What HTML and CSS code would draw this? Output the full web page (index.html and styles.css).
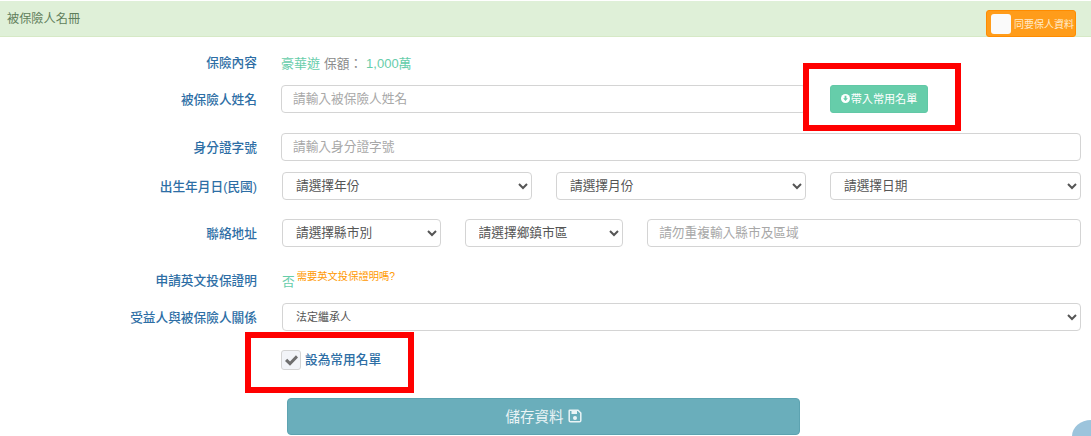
FILE: index.html
```html
<!DOCTYPE html>
<html lang="zh-Hant">
<head>
<meta charset="utf-8">
<title>被保險人名冊</title>
<link rel="stylesheet" href="styles.css">
</head>
<body>
<div class="panel-head">
  <span class="panel-title">被保險人名冊</span>
  <label class="same-btn"><span class="same-box"></span><span>同要保人資料</span></label>
</div>
<form class="form">
  <div class="row row-plan">
    <div class="label">保險內容</div>
    <div class="field plan"><span class="green">豪華遊</span><span class="gray">保額：</span><span class="green amount">1,000萬</span></div>
  </div>
  <div class="row row-name">
    <div class="label">被保險人姓名</div>
    <div class="field">
      <input class="control name-input" type="text" placeholder="請輸入被保險人姓名">
      <button class="import-btn" type="button">
        <svg class="import-icon" viewBox="0 0 16 16"><circle cx="8" cy="8" r="8" fill="#fff"/><path d="M6.400 3.200h3.200v4.400h2.600L8 12.400 3.800 7.600h2.600z" fill="#66cdaa"/></svg>帶入常用名單
      </button>
    </div>
  </div>
  <div class="row row-id">
    <div class="label">身分證字號</div>
    <div class="field"><input class="control grow" type="text" placeholder="請輸入身分證字號"></div>
  </div>
  <div class="row row-dob">
    <div class="label">出生年月日(民國)</div>
    <div class="field gap-24">
      <select class="control sel third"><option>請選擇年份</option></select>
      <select class="control sel third"><option>請選擇月份</option></select>
      <select class="control sel grow"><option>請選擇日期</option></select>
    </div>
  </div>
  <div class="row row-addr">
    <div class="label">聯絡地址</div>
    <div class="field gap-24">
      <select class="control sel small"><option>請選擇縣市別</option></select>
      <select class="control sel small"><option>請選擇鄉鎮市區</option></select>
      <input class="control grow" type="text" placeholder="請勿重複輸入縣市及區域">
    </div>
  </div>
  <div class="row row-en">
    <div class="label">申請英文投保證明</div>
    <div class="field en"><span class="green no">否</span><span class="hint">需要英文投保證明嗎?</span></div>
  </div>
  <div class="row row-rel">
    <div class="label">受益人與被保險人關係</div>
    <div class="field"><select class="control sel rel grow"><option>法定繼承人</option></select></div>
  </div>
  <div class="row row-check">
    <div class="label"></div>
    <label class="field check">
      <span class="check-box"><svg viewBox="0 0 16 14" width="15" height="13"><path d="M1 7.500 3.400 5l3 3L12.800 1.400 15 3.800 6.400 12.600z" fill="#6f6f6f"/></svg></span>
      <span class="check-text">設為常用名單</span>
    </label>
  </div>
  <button class="save-btn" type="button">儲存資料
    <svg class="save-icon" viewBox="0 0 14 14"><path d="M1.800 1.200H10L12.800 4V11.500A1.300 1.300 0 0 1 11.500 12.800H2.500A1.300 1.300 0 0 1 1.200 11.500V1.800A.6.600 0 0 1 1.800 1.200Z" fill="none" stroke="#eaf4f6" stroke-width="1.500"/><path d="M3.500 1.500H9V5H3.500Z" fill="#eaf4f6"/><circle cx="7" cy="9" r="2" fill="#eaf4f6"/></svg>
  </button>
</form>
<div class="mark mark-a"></div>
<div class="mark mark-b"></div>
<div class="float-circle"></div>
</body>
</html>
```
FILE: styles.css
```css
* { box-sizing: border-box; }
html, body { height: 100%; }
html { overflow: hidden; }
body {
  margin: 0;
  overflow: hidden;
  position: relative;
  background: #fff;
  font-family: "Liberation Sans", "Noto Sans CJK TC", sans-serif;
  font-size: 13px;
  color: #555;
}
.panel-head {
  margin-top: 1px;
  height: 36px;
  background: #dff0d8;
  border-bottom: 1px solid #d6e9c6;
  display: flex;
  align-items: flex-start;
  justify-content: space-between;
  padding: 0 15px 0 7px;
}
.panel-title { font-size: 12.200px; line-height: 36px; color: #5f7f5c; }
.same-btn {
  margin-top: 9px;
  width: 90px;
  height: 27px;
  background: #ff9c1a;
  border: 1px solid #ff8c00;
  border-radius: 3px;
  display: flex;
  align-items: center;
  padding-left: 4px;
  gap: 3px;
  color: #ffeccf;
  font-size: 10px;
  white-space: nowrap;
}
.same-box { width: 20px; height: 20px; background: #fafafa; border-radius: 3px; flex: none; }
.form { display: block; padding-right: 10px; }
.row { display: flex; align-items: center; }
.label {
  width: 257px;
  flex: none;
  text-align: right;
  font-size: 12.700px;
  font-weight: 500;
  color: #2d6ea5;
  padding-bottom: 2px;
}
.field { margin-left: 24px; flex: 1; display: flex; align-items: center; min-width: 0; }
.gap-24 { gap: 24px; }
.row-plan { margin-top: 15px; height: 21px; }
.row-name { margin-top: 12px; height: 28px; }
.row-id { margin-top: 20px; height: 28px; }
.row-dob { margin-top: 11px; height: 28px; }
.row-addr { margin-top: 19px; height: 28px; }
.row-en { margin-top: 23px; height: 20px; }
.row-rel { margin-top: 13px; height: 28px; }
.row-check { margin-top: 18px; height: 22px; }
.row-dob .field, .row-addr .field, .row-rel .field, .row-en .field { padding-left: 1px; }
.control {
  height: 28px;
  border: 1px solid #d4d4d4;
  border-radius: 4px;
  background: #fff;
  font-family: inherit;
  font-size: 12.700px;
  color: #555;
  padding: 0 11px;
  min-width: 0;
  outline: none;
}
.control::placeholder { color: #a8a8a8; opacity: 1; }
.grow { flex: 1; }
.name-input { width: 525px; flex: none; }
.sel { padding-left: 9px; }
.third { width: 250px; flex: none; }
.small { width: 158.600px; flex: none; }
.rel { font-size: 11px; }
.plan { font-size: 13px; gap: 4px; }
.green { color: #66cdaa; }
.amount { font-size: 13px; }
.gray { color: #8a8a8a; font-size: 12.700px; }
.import-btn {
  margin-left: 24px;
  width: 98px;
  height: 28px;
  background: #66cdaa;
  border: 1px solid #62c8a6;
  border-radius: 3px;
  color: #fff;
  font-family: inherit;
  font-size: 11.100px;
  display: flex;
  align-items: center;
  justify-content: center;
  padding: 0 0 2px;
  gap: 1px;
  white-space: nowrap;
}
.import-icon { width: 9px; height: 9px; flex: none; }
.en { gap: 2px; align-items: center; }
.no { font-size: 12.700px; }
.hint { color: #ff9800; font-size: 10.300px; position: relative; top: -5px; }
.check { gap: 4px; }
.check-box {
  width: 20px;
  height: 20px;
  border: 1px solid #d4d4d4;
  border-radius: 3px;
  background: #f2f4f8;
  display: flex;
  align-items: center;
  justify-content: center;
  flex: none;
}
.check-text { font-size: 12.700px; font-weight: 500; color: #2d6ea5; position: relative; top: -2px; }
.save-btn {
  display: flex;
  margin: 27px 0 0 287px;
  width: 513px;
  height: 37px;
  background: #6aaebb;
  border: 1px solid #5da3b1;
  border-radius: 4px;
  color: #eaf4f6;
  font-family: inherit;
  font-size: 14.500px;
  align-items: center;
  justify-content: center;
  gap: 4px;
  padding: 0 0 2px;
}
.save-icon { width: 14px; height: 14px; flex: none; }
.mark { position: absolute; border: 6px solid #f00; pointer-events: none; }
.mark-a { left: 803px; top: 63px; width: 158px; height: 68px; }
.mark-b { left: 245px; top: 332px; width: 169px; height: 61px; }
.float-circle {
  position: absolute;
  right: 0;
  bottom: 0;
  width: 19px;
  height: 16px;
  border-top-left-radius: 19px 16px;
  background: #9cc4dc;
}
```
